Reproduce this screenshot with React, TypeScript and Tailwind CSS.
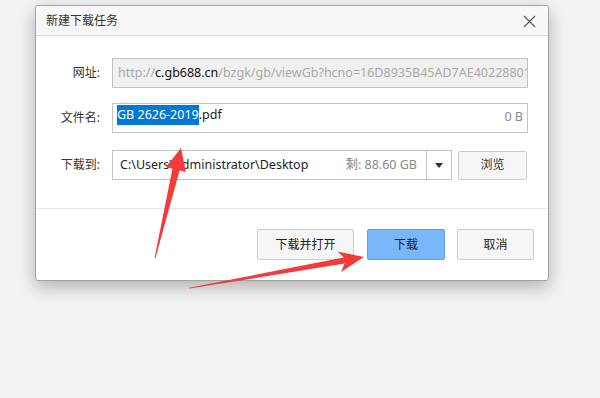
import React from "react";

const font = { fontFamily: '"Noto Sans", "Noto Sans CJK SC", sans-serif' };

export default function App() {
  return (
    <div
      className="relative w-[600px] h-[398px] overflow-hidden bg-[#f3f3f3] pt-[5px] pl-[35px] text-[12px] text-[#333]"
      style={font}
    >
      <div className="w-[514px] h-[276px] flex flex-col bg-white border border-[#a3a3a3] rounded-[3px] shadow-[0_6px_18px_rgba(0,0,0,0.28)]">
        {/* Title bar */}
        <div className="h-[30px] flex items-center justify-between bg-[#f7f7f7] border-b border-[#dcdcdc] pl-[10px] pr-[12px] rounded-t-[3px]">
          <span className="text-[12px] text-[#333]">新建下载任务</span>
          <svg width="13" height="13" viewBox="0 0 13 13" className="mt-[1px]">
            <path d="M1 1 L12 12 M12 1 L1 12" stroke="#555" strokeWidth="1.1" fill="none" />
          </svg>
        </div>

        {/* Body */}
        <div className="flex flex-col">
          {/* Row 1 */}
          <div className="flex items-center mt-[22px]">
            <div className="w-[64px] text-right">网址:</div>
            <div className="ml-[12px] w-[416px] h-[30px] flex items-center overflow-hidden whitespace-nowrap bg-[#f0f0f0] border border-[#c3c3c3] pl-[5px] text-[12.5px]">
              <span className="text-[#a9a9a9]">http://</span>
              <span className="text-[#111]">c.gb688.cn</span>
              <span className="text-[#a9a9a9]">/bzgk/gb/viewGb?hcno=16D8935B45AD7AE40228801</span>
            </div>
          </div>

          {/* Row 2 */}
          <div className="flex items-center mt-[15px]">
            <div className="w-[64px] text-right">文件名:</div>
            <div className="ml-[12px] w-[416px] h-[30px] flex items-start justify-between overflow-hidden whitespace-nowrap bg-white border border-[#c3c3c3] pl-[4px] pr-[4px] pt-[1px] text-[12.5px]">
              <div className="flex leading-[20px]">
                <span className="bg-[#0078d7] text-white">GB 2626-2019</span>
                <span className="text-[#222]">.pdf</span>
              </div>
              <span className="leading-[20px] mt-[2px] text-[#8a8a8a]">0 B</span>
            </div>
          </div>

          {/* Row 3 */}
          <div className="flex items-center mt-[17px]">
            <div className="w-[64px] text-right">下载到:</div>
            <div className="ml-[12px] w-[340px] h-[30px] flex items-center whitespace-nowrap bg-white border border-[#c3c3c3]">
              <div className="flex-1 flex items-center justify-between pl-[7px] pr-[9px] overflow-hidden text-[12.5px]">
                <span className="text-[#222]">C:\Users\Administrator\Desktop</span>
                <span className="text-[#8a8a8a]">剩: 88.60 GB</span>
              </div>
              <div className="w-[25px] h-full flex items-center justify-center border-l border-[#c3c3c3]">
                <svg width="8" height="5" viewBox="0 0 8 5">
                  <path d="M0 0 L8 0 L4 5 Z" fill="#333" />
                </svg>
              </div>
            </div>
            <button className="ml-[6px] w-[69px] h-[29px] flex items-center justify-center bg-[#f6f6f6] border border-[#cbcbcb] rounded-[2px] text-[#333]">
              浏览
            </button>
          </div>

          {/* Separator */}
          <div className="mt-[28px] border-t border-[#e6e6e6]" />

          {/* Footer */}
          <div className="flex justify-end pt-[20px] pr-[14px]">
            <button className="w-[97px] h-[31px] flex items-center justify-center bg-[#f6f6f6] border border-[#cbcbcb] rounded-[2px] text-[#222]">
              下载并打开
            </button>
            <button className="ml-[13px] w-[78px] h-[31px] flex items-center justify-center bg-[#79b7fa] border border-[#5e9fe6] rounded-[2px] text-[#1a1a1a]">
              下载
            </button>
            <button className="ml-[12px] w-[77px] h-[31px] flex items-center justify-center bg-[#f6f6f6] border border-[#cbcbcb] rounded-[2px] text-[#222]">
              取消
            </button>
          </div>
        </div>
      </div>

      {/* Red annotation arrows */}
      <svg
        className="absolute left-0 top-0 pointer-events-none"
        width="600"
        height="398"
        viewBox="0 0 600 398"
      >
        <polygon
          points="181,148 186,172 179.6,170.5 155.5,258 154.5,258 172.5,168.6 166,167"
          fill="#f23b3b"
        />
        <polygon
          points="364,257 341,272 344.6,263.6 189.5,288.6 189,287.8 343.8,257.4 337.5,251.5"
          fill="#f23b3b"
        />
      </svg>
    </div>
  );
}
